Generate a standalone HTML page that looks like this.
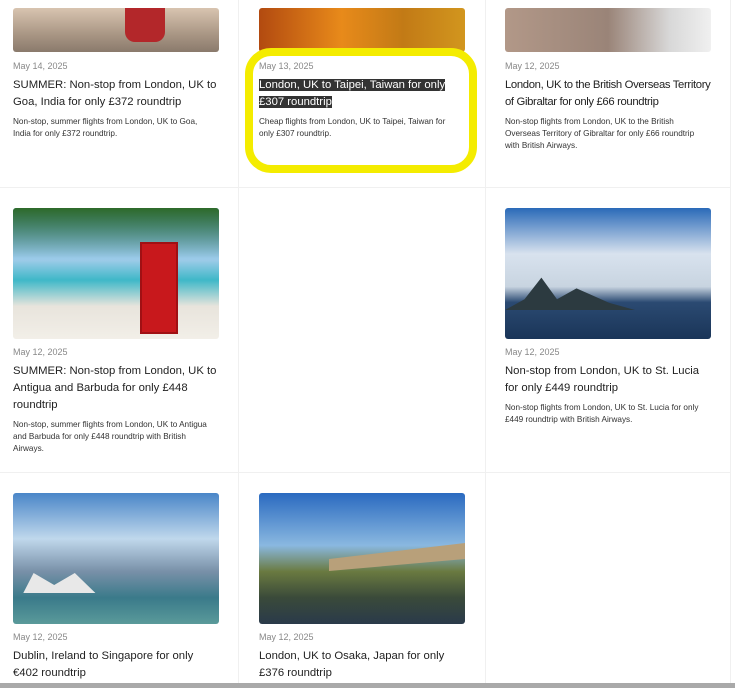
<!DOCTYPE html>
<html><head><meta charset="utf-8"><style>
*{margin:0;padding:0;box-sizing:border-box}
body{width:735px;height:699px;overflow:hidden;background:#fff;font-family:"Liberation Sans",sans-serif;color:#222;position:relative}
.vl{position:absolute;top:0;width:1px;height:683px;background:#f0f0f0}
.hl{position:absolute;left:0;width:730px;height:1px;background:#f0f0f0}
.img{position:absolute;width:206px;border-radius:3px;overflow:hidden}
.card{position:absolute;width:220px;white-space:nowrap}
.d{font-size:9px;color:#888;line-height:12px}
.t{font-size:11.3px;line-height:17px;margin-top:5px;color:#222}
.p{font-size:8.2px;line-height:12px;margin-top:5px;color:#333}
.hi{background:#333;color:#fff}
</style></head><body>
<div class="vl" style="left:238px"></div>
<div class="vl" style="left:485px"></div>
<div class="vl" style="left:730px"></div>
<div class="hl" style="top:187px"></div>
<div class="hl" style="top:472px"></div>
<div style="position:absolute;left:0;top:683px;width:735px;height:5px;background:#a9a9a9"></div>

<div class="img" style="left:13px;top:8px;height:44px;background:linear-gradient(180deg,#d8c4b0,#a99684 60%,#8a7a6c)"><div style="position:absolute;left:112px;top:0;width:40px;height:34px;background:#b3272a;border-radius:0 0 10px 10px"></div></div>
<div class="img" style="left:259px;top:8px;height:44px;background:linear-gradient(90deg,#b24a10,#e88a1a 40%,#c27a16 70%,#d2961e)"></div>
<div class="img" style="left:505px;top:8px;height:44px;background:linear-gradient(90deg,#b29888,#9a8478 50%,#d8d8d8 80%,#f0f0f0)"></div>

<div class="card" style="left:13px;top:60px"><div class="d">May 14, 2025</div><div class="t">SUMMER: Non-stop from London, UK to<br>Goa, India for only £372 roundtrip</div><div class="p">Non-stop, summer flights from London, UK to Goa,<br>India for only £372 roundtrip.</div></div>
<div style="position:absolute;left:245px;top:48px;width:232px;height:125px;border:8px solid #f4ec00;border-radius:26px"></div>
<div class="card" style="left:259px;top:60px"><div class="d">May 13, 2025</div><div class="t"><span class="hi">London, UK to Taipei, Taiwan for only<br>£307 roundtrip</span></div><div class="p">Cheap flights from London, UK to Taipei, Taiwan for<br>only £307 roundtrip.</div></div>
<div class="card" style="left:505px;top:60px"><div class="d">May 12, 2025</div><div class="t" style="letter-spacing:-0.35px">London, UK to the British Overseas Territory<br>of Gibraltar for only £66 roundtrip</div><div class="p">Non-stop flights from London, UK to the British<br>Overseas Territory of Gibraltar for only £66 roundtrip<br>with British Airways.</div></div>

<div class="img" style="left:13px;top:208px;height:131px;background:linear-gradient(180deg,#5aa0d8 0%,#9ccbe8 40%,#3fb8c8 55%,#e8e4dc 75%,#f2efe8)">
<div style="position:absolute;left:0;top:0;width:206px;height:50px;background:linear-gradient(180deg,#2e6a2a,rgba(60,120,50,0))"></div>
<div style="position:absolute;left:127px;top:34px;width:38px;height:92px;background:#c8181c;border:2px solid #a01014"></div></div>
<div class="img" style="left:505px;top:208px;height:131px;background:linear-gradient(180deg,#2a6ab8 0%,#d8e2ee 35%,#c8d4e0 60%,#2b4a72 72%,#1a3558 100%)">
<div style="position:absolute;left:0;top:66px;width:130px;height:36px;background:#2c3a40;clip-path:polygon(0 100%,15% 70%,28% 10%,40% 70%,55% 40%,80% 80%,100% 100%)"></div></div>

<div class="card" style="left:13px;top:346px"><div class="d">May 12, 2025</div><div class="t">SUMMER: Non-stop from London, UK to<br>Antigua and Barbuda for only £448<br>roundtrip</div><div class="p">Non-stop, summer flights from London, UK to Antigua<br>and Barbuda for only £448 roundtrip with British<br>Airways.</div></div>
<div class="card" style="left:505px;top:346px"><div class="d">May 12, 2025</div><div class="t">Non-stop from London, UK to St. Lucia<br>for only £449 roundtrip</div><div class="p">Non-stop flights from London, UK to St. Lucia for only<br>£449 roundtrip with British Airways.</div></div>

<div class="img" style="left:13px;top:493px;height:131px;background:linear-gradient(180deg,#4a86c8 0%,#c0d8ec 35%,#7890a8 60%,#3a7a8a 80%,#5a9a9a)">
<div style="position:absolute;left:0;top:80px;width:206px;height:20px;background:#e8e8e8;clip-path:polygon(5% 100%,10% 0,20% 60%,30% 0,40% 100%)"></div></div>
<div class="img" style="left:259px;top:493px;height:131px;background:linear-gradient(180deg,#2a6ac0 0%,#8ab8e0 40%,#6a7a40 60%,#3a4a3a 80%,#2a3a4a)">
<div style="position:absolute;left:70px;top:50px;width:136px;height:40px;background:#b8a07a;clip-path:polygon(0 40%,100% 0,100% 40%,0 70%)"></div></div>

<div class="card" style="left:13px;top:631px"><div class="d">May 12, 2025</div><div class="t">Dublin, Ireland to Singapore for only<br>€402 roundtrip</div></div>
<div class="card" style="left:259px;top:631px"><div class="d">May 12, 2025</div><div class="t">London, UK to Osaka, Japan for only<br>£376 roundtrip</div></div>
</body></html>
